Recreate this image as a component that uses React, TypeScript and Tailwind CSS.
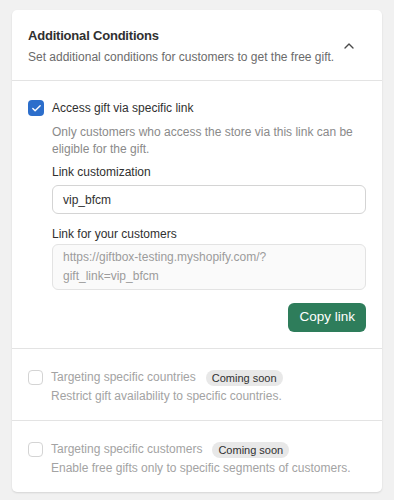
import { ChevronUp, Check } from "lucide-react";

const FONT = { fontFamily: "'Liberation Sans', Arial, sans-serif" };

function Disabled({ label, desc }: { label: string; desc: string }) {
  return (
    <div className="flex gap-2 border-t border-[#e3e3e3] px-4 pb-[15px] pt-[20px]">
      <div className="mt-[1px] h-[15px] w-[15px] shrink-0 rounded-[4px] border border-[#d4d4d4] bg-white" />
      <div className="flex flex-col">
        <div className="flex items-center gap-[10px]">
          <span className="text-[12px] leading-[17px] text-[#a3a3a3]">{label}</span>
          <span className="rounded-full bg-[#e8e8e8] px-[6px] text-[11px] leading-[16px] text-[#303030]">
            Coming soon
          </span>
        </div>
        <span className="mt-[2px] text-[12px] leading-[17px] text-[#a3a3a3]">{desc}</span>
      </div>
    </div>
  );
}

export default function App() {
  return (
    <div style={FONT} className="min-h-[500px] bg-[#f1f1f1] px-3 pt-[10px]">
      <div className="rounded-[5px] bg-white shadow-[0_1px_2px_rgba(0,0,0,0.12)]">
        <div className="flex items-center justify-between px-4 pb-[14px] pt-[16px]">
          <div className="flex flex-col">
            <span className="text-[13px] font-bold leading-[20px] tracking-[-0.2px] text-[#303030]">
              Additional Conditions
            </span>
            <span className="mt-[3px] text-[12px] leading-[17px] text-[#6b6b6b]">
              Set additional conditions for customers to get the free gift.
            </span>
          </div>
          <ChevronUp size={16} strokeWidth={2} className="mr-[9px] text-[#4a4a4a]" />
        </div>

        <div className="flex gap-2 border-t border-[#e3e3e3] px-4 pb-[16px] pt-[19px]">
          <div className="flex h-[16px] w-[16px] shrink-0 items-center justify-center rounded-[4px] bg-[#2c6ecb]">
            <Check size={11} strokeWidth={3} className="text-white" />
          </div>
          <div className="flex flex-1 flex-col">
            <span className="text-[12px] leading-[17px] text-[#303030]">
              Access gift via specific link
            </span>
            <span className="mt-[7px] text-[12px] leading-[17px] text-[#8a8a8a]">
              Only customers who access the store via this link can be eligible for the gift.
            </span>
            <span className="mt-[6px] text-[12px] leading-[17px] text-[#303030]">
              Link customization
            </span>
            <div className="mt-[4px] flex h-[29px] items-center rounded-[6px] border border-[#d4d4d4] px-[10px] text-[12px] text-[#303030]">
              vip_bfcm
            </div>
            <span className="mt-[12px] text-[12px] leading-[17px] text-[#303030]">
              Link for your customers
            </span>
            <div className="mt-[1px] rounded-[6px] border border-[#e3e3e3] bg-[#fafafa] px-[10px] py-[3px] text-[12px] leading-[19px] text-[#9c9c9c]">
              https://giftbox-testing.myshopify.com/?
              <br />
              gift_link=vip_bfcm
            </div>
            <div className="mt-[13px] flex justify-end">
              <button className="h-[29px] rounded-[6px] bg-[#2e7d5b] px-[11px] text-[13.5px] text-white">
                Copy link
              </button>
            </div>
          </div>
        </div>

        <Disabled
          label="Targeting specific countries"
          desc="Restrict gift availability to specific countries."
        />
        <Disabled
          label="Targeting specific customers"
          desc="Enable free gifts only to specific segments of customers."
        />
      </div>
    </div>
  );
}
